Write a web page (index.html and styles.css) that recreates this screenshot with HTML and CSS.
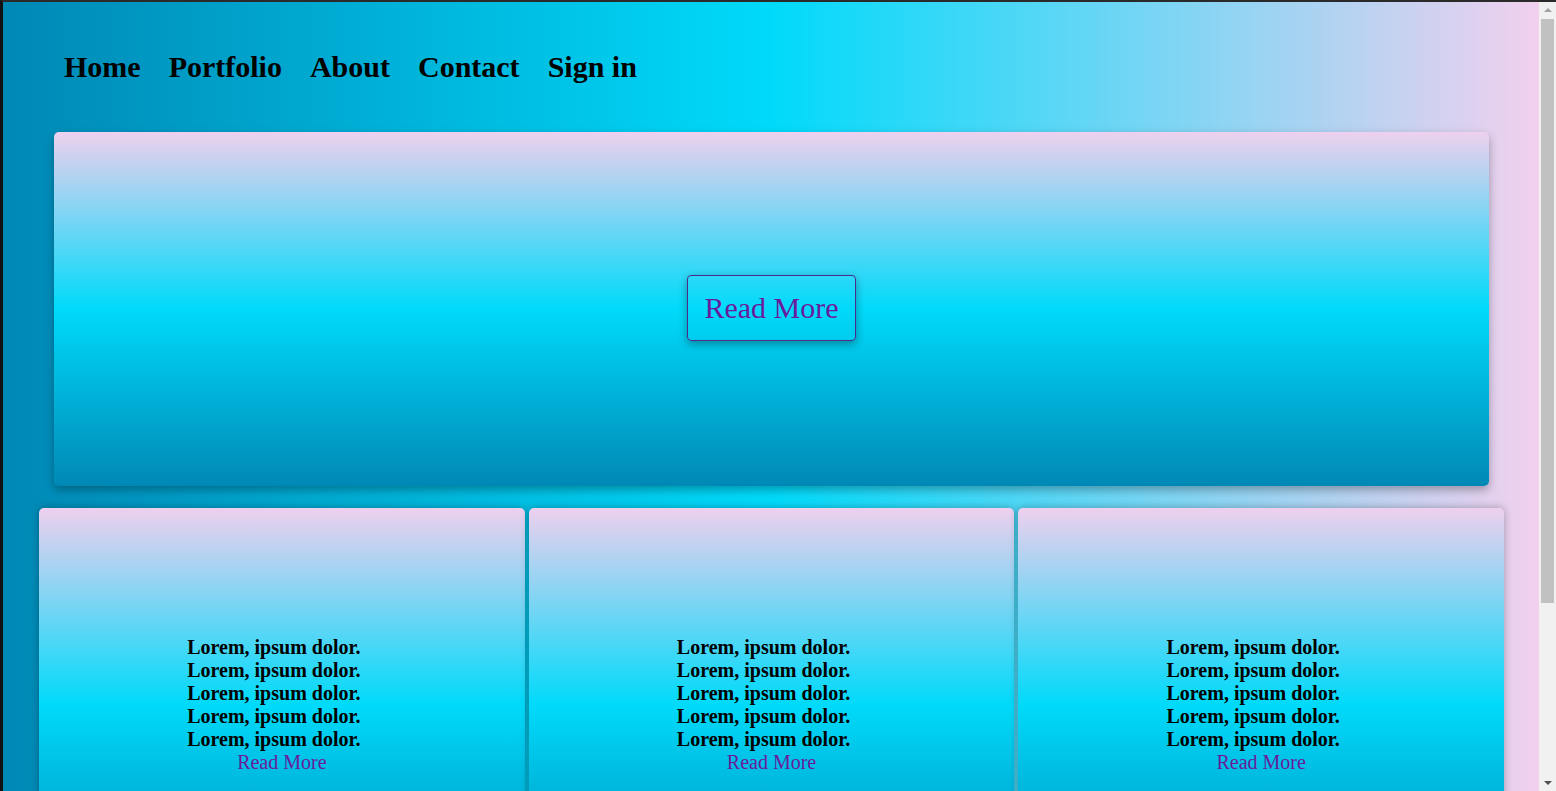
FILE: index.html
```html
<!DOCTYPE html>
<html lang="en">
<head>
<meta charset="utf-8">
<title>Portfolio</title>
<link rel="stylesheet" href="styles.css">
</head>
<body>
<nav class="nav">
  <a class="nav-link" href="#">Home</a>
  <a class="nav-link" href="#">Portfolio</a>
  <a class="nav-link" href="#">About</a>
  <a class="nav-link" href="#">Contact</a>
  <a class="nav-link" href="#">Sign in</a>
</nav>
<section class="hero">
  <button class="hero-btn">Read More</button>
</section>
<section class="cards">
  <div class="card">
    <p class="lorem">Lorem, ipsum dolor.<br>Lorem, ipsum dolor.<br>Lorem, ipsum dolor.<br>Lorem, ipsum dolor.<br>Lorem, ipsum dolor.</p>
    <a class="card-link" href="#">Read More</a>
  </div>
  <div class="card">
    <p class="lorem">Lorem, ipsum dolor.<br>Lorem, ipsum dolor.<br>Lorem, ipsum dolor.<br>Lorem, ipsum dolor.<br>Lorem, ipsum dolor.</p>
    <a class="card-link" href="#">Read More</a>
  </div>
  <div class="card">
    <p class="lorem">Lorem, ipsum dolor.<br>Lorem, ipsum dolor.<br>Lorem, ipsum dolor.<br>Lorem, ipsum dolor.<br>Lorem, ipsum dolor.</p>
    <a class="card-link" href="#">Read More</a>
  </div>
</section>
<div class="scrollbar" aria-hidden="true">
  <span class="arrow arrow-up"></span>
  <span class="thumb"></span>
  <span class="arrow arrow-down"></span>
</div>
</body>
</html>
```

FILE: styles.css
```css
html {
  background: #f1f1f1;
  border-top: 2px solid #2a2a2a;
  border-left: 3px solid #111;
}
body {
  margin: 0 17px 0 0;
  background: linear-gradient(to right, #0088b5, #00dafa, #f2d0ee);
  font-family: "Liberation Serif", "Times New Roman", serif;
  padding-bottom: 40px;
}
.nav {
  display: flex;
  gap: 28px;
  padding: 48px 0 48px 61px;
}
.nav-link {
  font-size: 30px;
  font-weight: bold;
  color: #000;
  text-decoration: none;
}
.hero {
  margin-left: 51px;
  width: 1435px;
  height: 354px;
  border-radius: 5px;
  background: linear-gradient(to bottom, #eed0ee, #00dafa, #0088b5);
  box-shadow: 0 4px 10px rgba(0, 0, 0, 0.3);
  display: flex;
  align-items: center;
  justify-content: center;
}
.hero-btn {
  font-family: "Liberation Serif", "Times New Roman", serif;
  font-size: 30px;
  color: #6a1a9c;
  background: transparent;
  border: 1px solid #4b2c8c;
  border-radius: 4px;
  padding: 15px 16px;
  box-shadow: 0 3px 8px rgba(0, 0, 0, 0.35);
  margin-top: -2px;
}
.cards {
  display: flex;
  gap: 4px;
  width: 1465px;
  margin: 22px 0 0 36px;
}
.card {
  flex: 1;
  height: 394px;
  border-radius: 5px;
  background: linear-gradient(to bottom, #eed0ee, #00dafa, #0088b5);
  box-shadow: 0 0 8px rgba(0, 0, 0, 0.3);
  display: flex;
  flex-direction: column;
  align-items: center;
  justify-content: center;
  text-align: center;
}
.lorem {
  margin: 0;
  padding-right: 16px;
  font-size: 20px;
  font-weight: bold;
  color: #000;
}
.card-link {
  font-size: 20px;
  color: #6a1a9c;
  text-decoration: none;
}
.scrollbar {
  position: fixed;
  top: 2px;
  right: 0;
  bottom: 0;
  width: 17px;
  background: #f1f1f1;
  display: flex;
  flex-direction: column;
  align-items: center;
}
.arrow {
  width: 0;
  height: 0;
  border-left: 4px solid transparent;
  border-right: 4px solid transparent;
  margin: 6px 0;
}
.arrow-up {
  border-bottom: 4px solid #a3a3a3;
}
.arrow-down {
  border-top: 4px solid #505050;
}
.thumb {
  flex: none;
  width: 13px;
  height: 584px;
  background: #c1c1c1;
  margin: 1px 0 auto;
}
```
